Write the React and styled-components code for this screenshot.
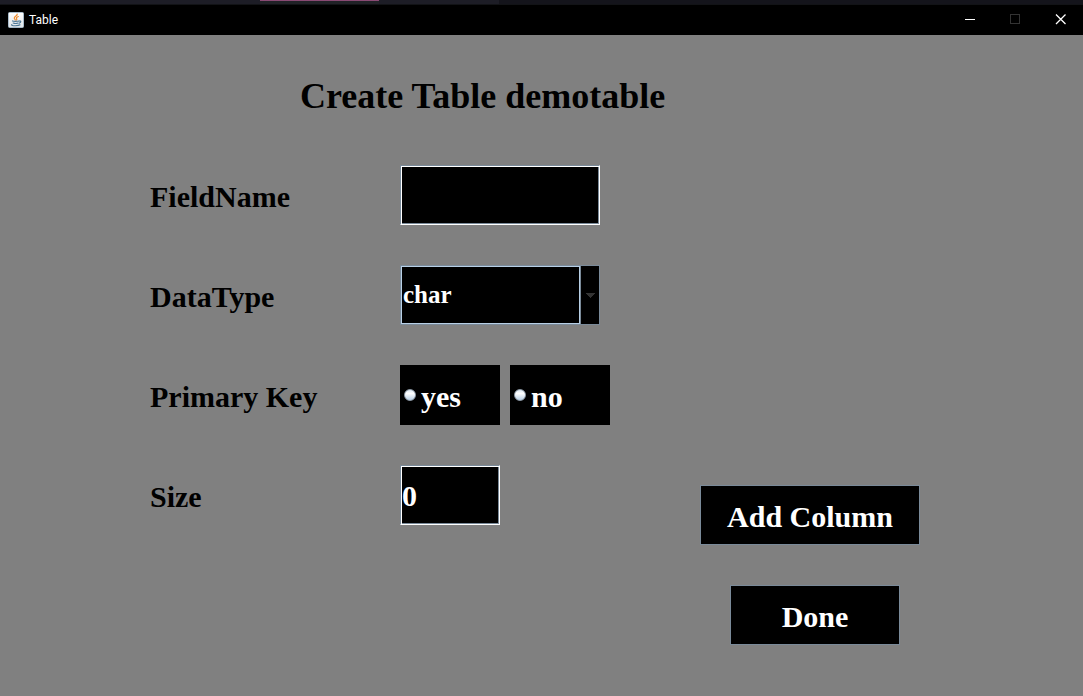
import React, { useState } from "react";
import styled, { createGlobalStyle } from "styled-components";

const steel = "#7a8a99";
const serif = `"Liberation Serif", "Times New Roman", serif`;

const GlobalStyle = createGlobalStyle`
  *, *::before, *::after { box-sizing: border-box; }
  body {
    margin: 0;
    background: #808080;
    color: #000;
    font-family: ${serif};
  }
  button, input, select { font: inherit; border-radius: 0; }
`;

const Window = styled.div`
  display: flex;
  flex-direction: column;
  min-height: 100vh;
`;

const Backdrop = styled.div`
  display: flex;
  height: 5px;
  background: #14141b;
  border-bottom: 1px solid #121316;
`;

const BackdropTab = styled.div`
  width: ${(p) => p.$width}px;
  background: ${(p) => (p.$active ? "#212227" : "#1d1d26")};
  border-top: ${(p) => (p.$active ? "1px solid #8a4a74" : "none")};
`;

const TitleBar = styled.header`
  display: flex;
  align-items: center;
  height: 30px;
  padding-left: 8px;
  background: #000;
  color: #fff;
`;

const WindowName = styled.span`
  flex: 1;
  margin-left: 5px;
  font: 12px/16px Roboto, "Noto Sans", sans-serif;
`;

const WindowButton = styled.button`
  display: flex;
  align-items: center;
  justify-content: center;
  width: 45px;
  height: 30px;
  padding: 0 0 1px;
  border: 0;
  background: #000;
  color: ${(p) => (p.disabled ? "#333" : "#fff")};
`;

const Content = styled.main`
  flex: 1;
  padding: 40px 0 50px 150px;
`;

const Heading = styled.h1`
  margin: 0 0 48px 150px;
  font-size: 36px;
  line-height: 42px;
`;

const Form = styled.form`
  display: flex;
  font-size: 30px;
  font-weight: bold;
  line-height: 64px;
`;

const Fields = styled.div`
  display: flex;
  flex-direction: column;
  gap: 40px;
  width: 550px;
`;

const Row = styled.div`
  display: grid;
  grid-template-columns: 250px 1fr;
  height: 60px;
`;

const TextBox = styled.input`
  width: ${(p) => p.$width}px;
  height: 60px;
  padding: 2px 1px 0;
  border: 1px solid;
  border-color: ${steel} #fff #fff ${steel};
  box-shadow: inset 1px 1px #fff, inset -1px -1px ${steel};
  background: #000;
  color: #fff;
  font-weight: bold;
  outline: none;
`;

const Combo = styled.div`
  position: relative;
  width: 200px;
  height: 60px;
  border: 1px solid ${steel};
  background: #000;
`;

const ComboSelect = styled.select`
  display: block;
  width: 100%;
  height: 58px;
  padding: 0 20px 0 1px;
  border: 1px solid #b8cfe5;
  appearance: none;
  background: #000;
  color: #fff;
  font-size: 25px;
  font-weight: bold;
  line-height: 56px;
  outline: none;
`;

const ComboArrow = styled.span`
  position: absolute;
  top: 0;
  right: 0;
  bottom: 0;
  display: flex;
  align-items: center;
  justify-content: center;
  width: 20px;
  border-left: 1px solid #b8cfe5;
  box-shadow: inset 1px 0 ${steel};
  background: #000;
  pointer-events: none;
`;

const Choices = styled.div`
  display: flex;
  gap: 10px;
`;

const Choice = styled.label`
  display: flex;
  align-items: center;
  gap: 5px;
  width: 100px;
  height: 60px;
  padding-left: 4px;
  background: #000;
  color: #fff;
`;

const ChoiceText = styled.span`
  padding-top: 4px;
  line-height: 60px;
`;

const Radio = styled.input`
  appearance: none;
  width: 12px;
  height: 12px;
  margin: 0;
  border: 1px solid #8f9ba8;
  border-radius: 50%;
  background: ${(p) =>
    p.checked
      ? "radial-gradient(circle, #222 0 3px, #dde8f3 4px)"
      : "linear-gradient(#dde8f3, #fff 35%, #b8cfe5)"};
`;

const Actions = styled.div`
  display: flex;
  flex-direction: column;
  align-items: flex-end;
  gap: 40px;
  padding-top: 320px;
`;

const ActionButton = styled.button`
  width: ${(p) => p.$width}px;
  height: 60px;
  margin-right: ${(p) => p.$inset || 0}px;
  padding: 4px 0 0;
  border: 1px solid ${steel};
  background: #000;
  color: #fff;
  line-height: 54px;
  white-space: nowrap;
`;

const JavaIcon = () => (
  <svg width="16" height="16" viewBox="0 0 16 16" aria-hidden="true">
    <defs>
      <linearGradient id="tile" x1="0" y1="0" x2="0" y2="1">
        <stop offset="0" stopColor="#fff" />
        <stop offset="1" stopColor="#dfe4e8" />
      </linearGradient>
    </defs>
    <rect x=".5" y=".5" width="15" height="15" rx="1" fill="url(#tile)" stroke="#a9bccb" />
    <g fill="none" strokeLinecap="round">
      <path d="M9.2 2C9.6 4 5.8 4.600 6.300 6.300C6.500 7 7.200 7.300 7.300 8M10.300 4.500C8.500 5.200 8 6 8.700 6.800C9 7.200 8.800 7.700 8.400 8" stroke="#ee8b2d" strokeWidth="1.200" />
      <path d="M4.500 9C5.500 9.500 9.500 9.500 10.700 9M5.200 11C6.500 11.500 8.800 11.500 10 11M11 9.200C13.200 8.300 13.500 10.300 11.200 11.200M3.800 12.700C2.500 14 10.500 14.200 12 12.800" stroke="#4d7896" strokeWidth="1.200" />
    </g>
  </svg>
);

export default function App() {
  const [fieldName, setFieldName] = useState("");
  const [dataType, setDataType] = useState("char");
  const [primaryKey, setPrimaryKey] = useState("");
  const [size, setSize] = useState("0");

  return (
    <>
      <GlobalStyle />
      <Window>
        <Backdrop>
          <BackdropTab $width={260} />
          <BackdropTab $width={119} $active />
          <BackdropTab $width={120} />
        </Backdrop>
        <TitleBar>
          <JavaIcon />
          <WindowName>Table</WindowName>
          <WindowButton type="button" aria-label="Minimize">
            <svg width="11" height="11" viewBox="0 0 11 11" shapeRendering="crispEdges">
              <path d="M0 5.500H10" stroke="currentColor" />
            </svg>
          </WindowButton>
          <WindowButton type="button" aria-label="Maximize" disabled>
            <svg width="11" height="11" viewBox="0 0 11 11" shapeRendering="crispEdges">
              <path d="M.5 .5H9.500V9.500H.5Z" fill="none" stroke="currentColor" />
            </svg>
          </WindowButton>
          <WindowButton type="button" aria-label="Close">
            <svg width="11" height="11" viewBox="0 0 11 11">
              <path d="M1 .5L10.500 10M10.500 .5L1 10" stroke="currentColor" strokeWidth="1.300" />
            </svg>
          </WindowButton>
        </TitleBar>
        <Content>
          <Heading>Create Table demotable</Heading>
          <Form onSubmit={(e) => e.preventDefault()}>
            <Fields>
              <Row>
                <label htmlFor="field-name">FieldName</label>
                <TextBox
                  id="field-name"
                  $width={200}
                  value={fieldName}
                  onChange={(e) => setFieldName(e.target.value)}
                />
              </Row>
              <Row>
                <label htmlFor="data-type">DataType</label>
                <Combo>
                  <ComboSelect
                    id="data-type"
                    value={dataType}
                    onChange={(e) => setDataType(e.target.value)}
                  >
                    <option>char</option>
                  </ComboSelect>
                  <ComboArrow>
                    <svg width="10" height="5" viewBox="0 0 10 5" shapeRendering="crispEdges">
                      <path d="M0 0H10L5 5Z" fill="#333" />
                    </svg>
                  </ComboArrow>
                </Combo>
              </Row>
              <Row role="radiogroup" aria-labelledby="primary-key">
                <span id="primary-key">Primary Key</span>
                <Choices>
                  {["yes", "no"].map((choice) => (
                    <Choice key={choice}>
                      <Radio
                        type="radio"
                        name="primary-key"
                        value={choice}
                        checked={primaryKey === choice}
                        onChange={() => setPrimaryKey(choice)}
                      />
                      <ChoiceText>{choice}</ChoiceText>
                    </Choice>
                  ))}
                </Choices>
              </Row>
              <Row>
                <label htmlFor="size">Size</label>
                <TextBox
                  id="size"
                  $width={100}
                  value={size}
                  onChange={(e) => setSize(e.target.value)}
                />
              </Row>
            </Fields>
            <Actions>
              <ActionButton type="submit" $width={220}>Add Column</ActionButton>
              <ActionButton type="button" $width={170} $inset={20}>Done</ActionButton>
            </Actions>
          </Form>
        </Content>
      </Window>
    </>
  );
}
